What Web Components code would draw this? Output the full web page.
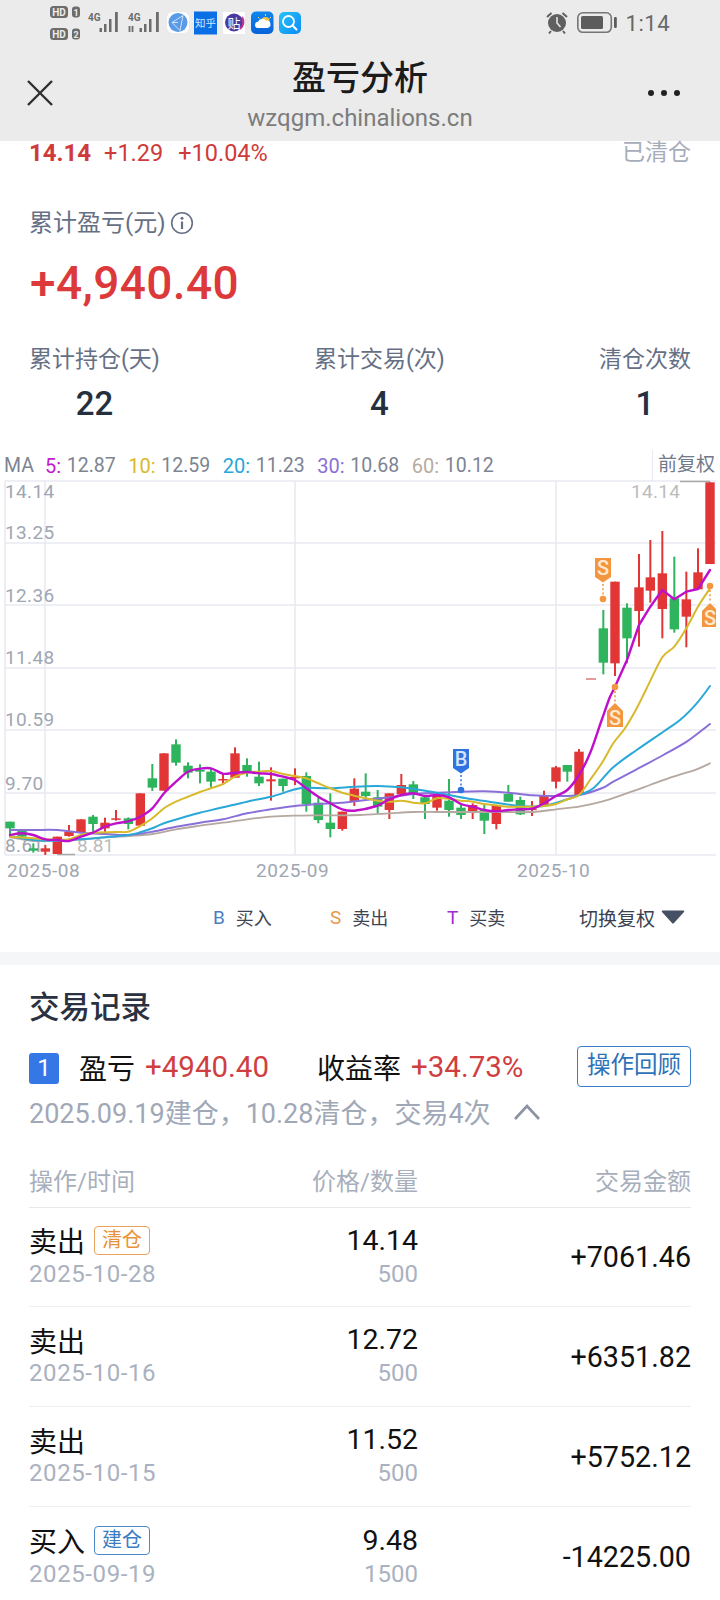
<!DOCTYPE html>
<html lang="zh"><head><meta charset="utf-8"><title>盈亏分析</title>
<style>
html,body{margin:0;padding:0;background:#fff}
body{font-family:Roboto,"Noto Sans CJK SC",sans-serif}
app-page{display:block;width:720px;height:1600px;overflow:hidden}
</style></head>
<body>
<app-page>
  <status-bar></status-bar>
  <nav-bar title="盈亏分析" url="wzqgm.chinalions.cn"></nav-bar>
  <stock-summary></stock-summary>
  <kline-chart></kline-chart>
  <trade-panel>
    <trade-row action="卖出" tag="清仓" kind="sell" date="2025-10-28" price="14.14" qty="500" amount="+7061.46" first></trade-row>
    <trade-row action="卖出" date="2025-10-16" price="12.72" qty="500" amount="+6351.82"></trade-row>
    <trade-row action="卖出" date="2025-10-15" price="11.52" qty="500" amount="+5752.12"></trade-row>
    <trade-row action="买入" tag="建仓" kind="buy" date="2025-09-19" price="9.48" qty="1500" amount="-14225.00"></trade-row>
  </trade-panel>
</app-page>
<script>
const FONT='Roboto,"Noto Sans CJK SC",sans-serif';
function el(name,html){customElements.define(name,class extends HTMLElement{
  constructor(){super();this.attachShadow({mode:'open'})}
  connectedCallback(){this.shadowRoot.innerHTML=typeof html==='function'?html(this):html}
})}
el('status-bar',`<style>
:host{display:flex;height:50px;background:#ebebeb;align-items:flex-start;box-sizing:border-box;padding-left:50px;font-family:${FONT}}
svg{display:block;flex:none}
.time{margin-left:8px;font-size:22px;line-height:48px;color:#686868;letter-spacing:.5px}
.sp{flex:1}
</style>
<svg width="112" height="50" viewBox="50 0 112 50">
  <g font-family="Roboto" font-weight="700">
  <rect x="50" y="6" width="18" height="12" rx="3.5" fill="#6c6c6c"/><text x="59" y="15.6" font-size="10" fill="#ebebeb" text-anchor="middle">HD</text>
  <rect x="72" y="6.5" width="8" height="11" rx="3" fill="#6c6c6c"/><text x="76" y="15.5" font-size="9" fill="#ebebeb" text-anchor="middle">1</text>
  <rect x="50" y="28" width="18" height="12" rx="3.5" fill="#6c6c6c"/><text x="59" y="37.6" font-size="10" fill="#ebebeb" text-anchor="middle">HD</text>
  <rect x="72" y="28.5" width="8" height="11" rx="3" fill="#6c6c6c"/><text x="76" y="37.5" font-size="9" fill="#ebebeb" text-anchor="middle">2</text>
  <text x="88" y="21" font-size="10" fill="#6c6c6c">4G</text>
  <text x="128" y="21" font-size="10" fill="#6c6c6c">4G</text>
  </g>
  <g fill="#6c6c6c">
   <rect x="99.500" y="28" width="2.500" height="4"/><rect x="104" y="24" width="2.500" height="8"/><rect x="109" y="19" width="2.500" height="13"/><rect x="115" y="12" width="2.800" height="20"/>
   <path d="M129.500 26v6M132.500 26v6" stroke="#6c6c6c" stroke-width="1.800"/>
   <rect x="139.500" y="28" width="2.500" height="4"/><rect x="144" y="24" width="2.500" height="8"/><rect x="149" y="19" width="2.500" height="13"/><rect x="156" y="12" width="2.800" height="20"/>
  </g>
</svg>
<svg width="138" height="50" viewBox="164 0 138 50" style="margin-left:2px">
  <defs><linearGradient id="w" x1="0" y1="0" x2="0" y2="1"><stop offset="0" stop-color="#0f86ee"/><stop offset="1" stop-color="#0a63d8"/></linearGradient>
  <linearGradient id="q" x1="0" y1="0" x2="1" y2="1"><stop offset="0" stop-color="#25c3fb"/><stop offset="1" stop-color="#0d8bf5"/></linearGradient></defs>
  <rect x="167" y="12" width="22" height="21" rx="6" fill="#fff"/>
  <circle cx="178" cy="22.500" r="9.500" fill="#5a9ae6"/>
  <path d="M183 15.500L172 22.500L180 30.500L183 15.500M172 22.500L178 22.500" fill="none" stroke="#cfe3fa" stroke-width="1"/>
  <rect x="194" y="11.500" width="23" height="23" fill="#0a6fe4"/>
  <text x="205.500" y="27" font-size="10.500" fill="#cfe6ff" text-anchor="middle" font-family="Noto Sans CJK SC">知乎</text>
  <rect x="223" y="12" width="22" height="22" fill="#fff"/>
  <circle cx="234" cy="22.500" r="9" fill="#4a3aa0"/>
  <path d="M242 17a9 9 0 0 1-2 12" stroke="#c0308e" stroke-width="2" fill="none"/>
  <text x="234" y="27.500" font-size="13" fill="#fff" text-anchor="middle" font-family="Noto Sans CJK SC">贴</text>
  <rect x="251" y="11.500" width="22.500" height="22.500" rx="5" fill="url(#w)"/>
  <circle cx="265.500" cy="21" r="4" fill="#f3c544"/>
  <path d="M265.500 14v2M271 17l-1.500 1.500M258 17l1.500 1.500" stroke="#f3d27a" stroke-width="1"/>
  <path d="M257.500 28a3.200 3.200 0 0 1 .5-6.300a4.500 4.500 0 0 1 8-1a3.600 3.600 0 0 1 1.500 7.300z" fill="#fff"/>
  <rect x="279" y="12" width="22" height="22" rx="5" fill="url(#q)"/>
  <circle cx="288.500" cy="21.500" r="5.500" fill="none" stroke="#fff" stroke-width="1.800"/>
  <path d="M292.500 25.500L296.500 29.500" stroke="#fff" stroke-width="2" stroke-linecap="round"/>
</svg>
<span class="sp"></span>
<svg width="72" height="50" viewBox="547 0 72 50">
  <circle cx="558" cy="23" r="9" fill="#5f5f5f"/>
  <path d="M558 17v6l3.500 4" stroke="#ebebeb" stroke-width="1.500" fill="none"/>
  <path d="M548 17l4.500-4M568 17l-4.500-4M552 31l-2 2.500M564 31l2 2.500" stroke="#5f5f5f" stroke-width="2" fill="none"/>
  <rect x="578.800" y="12.800" width="33.500" height="19.500" rx="5" fill="none" stroke="#757575" stroke-width="1.600"/>
  <rect x="582" y="16" width="22" height="13" rx="1.500" fill="#5c5c5c"/>
  <rect x="615" y="17" width="2.800" height="11" rx="1.200" fill="#5c5c5c"/>
</svg>
<span class="time">1:14</span><span style="width:50px"></span>`);
el('nav-bar',t=>`<style>
:host{display:flex;height:91px;background:#ebebeb;align-items:center;box-sizing:border-box;padding:0 27px;font-family:${FONT}}
.x,.m{width:60px;flex:none;display:flex;margin-top:-5px}
.m{justify-content:flex-end}
.c{flex:1;text-align:center;margin-top:-1px}
.t{font-size:34px;line-height:42px;font-weight:500;color:#1b1b1b;font-family:"Noto Sans CJK SC",sans-serif}
.u{font-size:24px;line-height:34px;margin-top:4px;color:#7c7c7c}
svg{display:block}
</style>
<div class="x"><svg width="26" height="26" viewBox="0 0 26 26"><path d="M1 1L25 25M25 1L1 25" stroke="#303030" stroke-width="2.400"/></svg></div>
<div class="c"><div class="t">${t.getAttribute('title')}</div><div class="u">${t.getAttribute('url')}</div></div>
<div class="m"><svg width="36" height="8" viewBox="0 0 36 8" style="margin-right:11px"><circle cx="5" cy="4" r="3" fill="#222"/><circle cx="18" cy="4" r="3" fill="#222"/><circle cx="31" cy="4" r="3" fill="#222"/></svg></div>`);
el('stat-item',t=>`<style>
:host{display:block;text-align:center}
.l{font-size:23px;line-height:26px;color:#667085}
.v{font-size:33px;line-height:40px;margin-top:11px;color:#262f3e;font-weight:500}
</style><div class="l">${t.getAttribute('label')}</div><div class="v">${t.getAttribute('value')}</div>`);
el('stock-summary',`<style>
:host{display:block;padding:0 29px;background:#fff;font-family:${FONT}}
.row{display:flex;align-items:center;height:24px;line-height:24px;color:#cf3a3a;font-size:23.500px}
.row b{font-size:24px;font-weight:700;margin-right:13px}
.row span{margin-right:15px}
.row i{margin-left:auto;font-style:normal;color:#a5adbb;font-size:23px}
.lab{margin-top:45px;display:flex;align-items:center;font-size:24px;line-height:26px;color:#667085;gap:4px}
.big{margin-top:19px;font-size:46px;line-height:56px;font-weight:500;color:#dc3a3a;margin-left:1px;letter-spacing:.4px}
.stats{margin-top:36px;display:flex;justify-content:space-between}
svg{display:block}
</style>
<div class="row"><b>14.14</b><span>+1.29</span><span>+10.04%</span><i>已清仓</i></div>
<div class="lab">累计盈亏(元)<svg width="24" height="24" viewBox="0 0 24 24"><circle cx="12" cy="12" r="10.300" fill="none" stroke="#667085" stroke-width="1.600"/><circle cx="12" cy="7.200" r="1.500" fill="#667085"/><path d="M12 10.500V18" stroke="#667085" stroke-width="2.200"/></svg></div>
<div class="big">+4,940.40</div>
<div class="stats"><stat-item label="累计持仓(天)" value="22"></stat-item><stat-item label="累计交易(次)" value="4"></stat-item><stat-item label="清仓次数" value="1"></stat-item></div>`);

const A=[[30,'g',425,445,425,465],[66,'g',453,470,450,478],[100,'g',505,512,490,518],[136,'r',505,515,495,525],[172,'r',470,522,470,522],[207,'r',455,468,435,470],[243,'r',418,458,418,458],[279,'g',410,432,405,455],[315,'r',428,445,413,463],[348,'r',415,419,390,422],[385,'g',415,432,412,448],[421,'r',340,437,340,437],[457,'g',295,323,252,333],[492,'r',220,332,220,332],[528,'g',193,248,178,257],[564,'g',257,278,247,295],[600,'g',270,275,253,310],[633,'g',275,305,265,322],[669,'r',297,301,285,315],[705,'r',220,293,202,293],[741,'g',255,275,235,290],[777,'g',290,310,245,318],[813,'r',298,304,262,362],[849,'g',296,318,296,335],[885,'r',290,295,265,315],[919,'g',288,372,277,395],[955,'g',368,420,352,430],[991,'g',428,447,340,472],[1027,'r',395,447,395,452],[1063,'r',326,365,295,378]];
const B=[[17,'g',335,348,280,358],[53,'g',352,380,330,400],[88,'r',340,390,340,417],[124,'r',315,343,282,345],[160,'g',313,345,303,357],[195,'g',352,372,350,417],[231,'r',345,383,340,392],[267,'g',362,390,297,410],[303,'g',383,405,375,417],[338,'r',375,397,370,417],[373,'g',390,422,370,462],[409,'r',375,432,375,448],[445,'g',342,365,315,365],[481,'g',360,403,350,405],[516,'r',385,390,363,408],[552,'r',345,375,332,375],[588,'r',262,305,258,325],[622,'g',255,275,255,305],[657,'r',215,345,207,345]];
const C=[[730,'g',535,638,480,673],[765,'r',395,640,395,678],[801,'g',473,565,460,640],[837,'r',412,483,312,590],[871,'r',382,422,270,458],[907,'r',370,477,243,565],[943,'g',445,538,320,548],[979,'r',448,500,365,592],[1014,'r',367,418,295,420],[1050,'r',97,342,97,342]];
const RED='#e23636',GREEN='#2eb45c';
function candles(list,ox,oy){return list.map(([x,k,t,b,wt,wb])=>{
  const c=k==='r'?RED:GREEN,X=ox+x/3;
  return `<rect x="${X-1}" y="${oy+wt/3}" width="2" height="${(wb-wt)/3}" fill="${c}"/><rect x="${X-4.7}" y="${oy+t/3}" width="9.400" height="${Math.max(1.5,(b-t)/3)}" fill="${c}"/>`}).join('')}
const seg=(p,ox,oy)=>p.map(([x,y])=>[ox+x/3,oy+y/3]);
function line(pts,color,w,sharpFrom){
  const f=n=>n.toFixed(1);
  let d=`M${f(pts[0][0])} ${f(pts[0][1])}`;
  for(let i=0;i<pts.length-1;i++){
    if(sharpFrom!==undefined&&i>=sharpFrom){d+=`L${f(pts[i+1][0])} ${f(pts[i+1][1])}`;continue}
    const p0=pts[Math.max(0,i-1)],p1=pts[i],p2=pts[i+1],p3=pts[Math.min(pts.length-1,i+2)];
    d+=`C${f(p1[0]+(p2[0]-p0[0])/6)} ${f(p1[1]+(p2[1]-p0[1])/6)} ${f(p2[0]-(p3[0]-p1[0])/6)} ${f(p2[1]-(p3[1]-p1[1])/6)} ${f(p2[0])} ${f(p2[1])}`}
  return `<path d="${d}" fill="none" stroke="${color}" stroke-width="${w}" stroke-linejoin="round" stroke-linecap="round"/>`}
const MA5=[...seg([[30,465],[66,460],[100,465],[136,478],[172,480],[207,483],[243,470],[279,458],[315,440],[348,430],[385,424],[421,410],[457,385],[492,340],[528,305],[564,275],[600,266],[633,265],[669,281],[705,278],[741,276],[777,280],[813,282],[849,290],[885,300],[919,325],[955,350],[991,370],[1027,388],[1063,392]],0,680),
 ...seg([[50,378],[88,358],[124,345],[160,340],[195,348],[231,345],[267,352],[303,372],[338,380],[373,390],[409,394],[445,390],[481,388],[516,386],[552,370],[588,348],[622,330],[657,285],[690,220],[725,120],[750,50]],360,680),
 ...seg([[765,710],[801,630],[837,525],[871,470],[907,420],[943,448],[979,425],[1014,417],[1050,360]],360,450)];
const MA10=[...seg([[30,470],[100,475],[172,480],[207,478],[243,465],[279,458],[348,456],[385,455],[421,438],[457,415],[492,385],[528,365],[564,350],[600,336],[633,325],[669,312],[705,290],[741,278],[777,275],[813,273],[849,282],[885,288],[919,295],[955,310],[991,325],[1027,338],[1063,347]],0,680),
 ...seg([[53,362],[88,365],[124,362],[160,368],[195,370],[231,355],[267,357],[303,362],[338,365],[373,372],[409,376],[445,380],[481,380],[516,380],[552,378],[588,372],[622,358],[657,345],[690,300],[725,250],[760,190],[795,145],[830,85]],360,680),
 ...seg([[860,715],[907,622],[943,590],[979,535],[1014,470],[1050,415]],360,450)];
const MA20=[...seg([[30,468],[100,480],[172,482],[243,478],[315,472],[385,465],[421,457],[457,445],[492,430],[564,408],[600,398],[669,382],[741,365],[813,350],[885,328],[919,323],[991,325],[1063,320]],0,680),
 ...seg([[53,318],[124,322],[195,332],[267,345],[338,358],[409,368],[481,378],[552,378],[622,358],[657,345],[700,325],[760,262],[830,210],[910,155],[960,120],[1010,70],[1050,18]],360,680)];
const MA30=[...seg([[30,450],[100,450],[172,450],[243,458],[315,462],[385,465],[457,455],[528,440],[600,428],[669,418],[741,400],[813,388],[885,378],[955,372],[1027,368]],0,680),
 ...seg([[0,362],[88,352],[160,342],[231,338],[303,335],[373,334],[445,338],[516,346],[588,348],[657,345],[725,325],[760,305],[830,268],[910,225],[980,185],[1050,132]],360,680)];
const MA60=[...seg([[30,472],[100,483],[172,482],[243,478],[315,472],[385,468],[457,462],[528,448],[600,437],[669,428],[741,418],[813,410],[885,407],[955,406],[1027,406]],0,680),
 ...seg([[0,405],[88,400],[160,396],[231,396],[303,396],[373,396],[445,396],[516,396],[588,388],[657,380],[725,365],[800,340],[870,315],[940,290],[1010,268],[1050,250]],360,680)];
function dots(x,y1,y2,c){return `<path d="M${x} ${y1}V${y2}" stroke="${c}" stroke-width="2" stroke-dasharray="2 2.200" opacity=".75"/>`}
function downTag(x,top,letter,c,lc){
  return `<path d="M${x-8} ${top}h16v19l-8 5.500l-8-5.500z" fill="${c}"/><text x="${x}" y="${top+17}" font-size="20" font-weight="500" fill="${lc}" text-anchor="middle" font-family="Roboto">${letter}</text>`}
function upTag(x,tip,letter,c,lc){
  return `<path d="M${x} ${tip}l8 8v16h-16v-16z" fill="${c}"/><text x="${x}" y="${tip+22}" font-size="20" font-weight="500" fill="${lc}" text-anchor="middle" font-family="Roboto">${letter}</text>`}
const OR='#f4963f';
const hl=[481,543,605,668,730,793,855],vl=[5,45,295,556];
const lab=[['14.14',491],['13.25',532],['12.36',595],['11.48',657],['10.59',719],['9.70',783],['8.61',845]];
el('kline-chart',`<style>
:host{display:block;background:#fff;font-family:${FONT}}
.ma{display:flex;height:31px;margin-top:26px;align-items:center;box-sizing:border-box;padding-left:4px;font-size:19.500px;color:#7d8492;position:relative}
.ma span{white-space:pre}
.ma .k{margin-left:12.500px;margin-right:.75px;font-size:20px}
.ma .k.f{margin-left:11px}
.adj{margin-left:auto;width:68px;height:31px;box-sizing:border-box;border-left:1.500px solid #e9eaf1;padding-left:5px;line-height:30px;font-size:19px;color:#727a8a}
svg{display:block;overflow:visible}
.lg{display:flex;height:30px;margin-top:20px;margin-bottom:20px;align-items:center;padding-left:213px;font-size:18px;color:#3e4552}
.lg b{font-weight:400;font-size:19px;margin-right:11px}
.it{display:flex;align-items:center;width:117px}
.it.t{width:132px}
.sw{display:flex;align-items:center;font-size:19px;color:#3a4250;gap:6px}
</style>
<div class="ma"><span>MA</span><span class="k f" style="color:#c01ccb">5: </span><span>12.87</span><span class="k" style="color:#d9b92b">10: </span><span>12.59</span><span class="k" style="color:#25a7d9">20: </span><span>11.23</span><span class="k" style="color:#8a6fd8">30: </span><span>10.68</span><span class="k" style="color:#b8aba0">60: </span><span>10.12</span><div class="adj">前复权</div></div>
<svg width="720" height="401" viewBox="0 481 720 401" font-family="Roboto">
<defs><clipPath id="cp"><rect x="0" y="481" width="716" height="400"/></clipPath></defs>
${hl.map(y=>`<path d="M5 ${y}H716" stroke="#e9eaf1" stroke-width="1.600"/>`).join('')}
${vl.map(x=>`<path d="M${x} 481V855" stroke="#e9eaf1" stroke-width="1.600"/>`).join('')}
${lab.map(([t,y])=>`<text x="5" y="${y+7}" font-size="19" letter-spacing=".35" fill="#a0a6b2">${t}</text>`).join('')}
<text x="631" y="498" font-size="19" letter-spacing=".3" fill="#bcbcbc">14.14</text><path d="M680 481.500H710" stroke="#a8a8a8" stroke-width="1.500"/>
<text x="77" y="852" font-size="19" fill="#bcbcbc">8.81</text><path d="M57 854.500H75" stroke="#a8a8a8" stroke-width="1.500"/>
${['2025-08|7','2025-09|256','2025-10|517'].map(s=>{const[a,b]=s.split('|');return `<text x="${b}" y="877" font-size="19" letter-spacing=".55" fill="#a0a6b2">${a}</text>`}).join('')}
<g clip-path="url(#cp)">
<rect x="586" y="678" width="10" height="2" fill="#e59a9a"/>
${candles(A,0,680)}${candles(B,360,680)}${candles(C,360,450)}
${line(MA60,'#b5a8a0',1.8)}${line(MA30,'#8a6fd8',2)}${line(MA20,'#29a8d8',2)}${line(MA10,'#d9b92b',2)}${line(MA5,'#be10ca',2.4,MA5.length-10)}
${downTag(461,749,'B','#2f73e0','#d5e4ff')}${dots(461,775,786,'#2f73e0')}<circle cx="461" cy="790" r="3.300" fill="#2f73e0"/>
${downTag(603,558,'S',OR,'#ffe9cf')}${dots(603,584,595,OR)}<circle cx="603" cy="599" r="3.300" fill="${OR}"/>
<circle cx="615" cy="687" r="3.300" fill="${OR}"/>${dots(615,691,702,OR)}${upTag(615,703,'S',OR,'#ffe9cf')}
<circle cx="710" cy="586" r="3.300" fill="${OR}"/>${dots(710,590,602,OR)}${upTag(710,603,'S',OR,'#ffe9cf')}
</g></svg>
<div class="lg"><div class="it"><b style="color:#4a7fc4">B</b>买入</div><div class="it"><b style="color:#e8994a">S</b>卖出</div><div class="it t"><b style="color:#a02cd0">T</b>买卖</div>
<div class="sw">切换复权<svg width="24" height="14" viewBox="0 0 24 14"><path d="M1.500 0.500H22.500Q24 0.500 23 2L13 13Q12 14 11 13L1 2Q0 0.500 1.500 0.500z" fill="#465064"/></svg></div></div>`);
el('trade-panel',`<style>
:host{display:block;border-top:13px solid #f5f6f8;background:#fff;padding:20px 29px 0;font-family:${FONT}}
h2{margin:0;font-size:30.500px;line-height:40px;font-weight:500;color:#2a3140;font-family:"Noto Sans CJK SC",sans-serif}
.sum{display:flex;align-items:center;height:41px;margin-top:21px;font-size:28px;color:#cf3f3f}
.n{width:30px;height:31px;background:#3578e5;border-radius:3px;color:#fff;font-size:24px;line-height:31px;text-align:center;margin-right:20px;margin-top:3px}
.k{color:#111;margin-right:10px;font-size:28px}
.v{font-size:29.500px}
.btn{margin-left:auto;box-sizing:border-box;width:114px;height:41px;border:1.500px solid #3a7bc8;border-radius:4px;color:#2e72b8;font-size:23.500px;line-height:37px;text-align:center}
.meta{display:flex;align-items:center;margin-top:8px;height:32px;font-size:27px;color:#a0a8b8}
.meta svg{margin-left:22px;margin-top:1px}
.hd{display:grid;grid-template-columns:250px 139px 1fr;margin-top:39px;height:32px;line-height:32px;font-size:24px;color:#a8afbc;padding-bottom:9px;border-bottom:1px solid #e8e9ec}
.hd div:nth-child(n+2){text-align:right}
</style>
<h2>交易记录</h2>
<div class="sum"><div class="n">1</div><span class="k">盈亏</span><span class="v" style="margin-right:48px">+4940.40</span><span class="k">收益率</span><span class="v">+34.73%</span><div class="btn">操作回顾</div></div>
<div class="meta">2025.09.19建仓，10.28清仓，交易4次<svg width="28" height="16" viewBox="0 0 28 16"><path d="M2 15L14 2L26 15" fill="none" stroke="#8a93a3" stroke-width="2.600"/></svg></div>
<div class="hd"><div>操作/时间</div><div>价格/数量</div><div>交易金额</div></div>
<slot></slot>`);
el('trade-row',t=>{const a=n=>t.getAttribute(n)||'';const kind=a('kind');
return `<style>
:host{display:grid;grid-template-columns:250px 139px 1fr;height:100px;align-items:center;box-sizing:border-box;border-bottom:1px solid #eeeff2;font-family:${FONT}}
:host([first]){height:99px}
:host(:last-child){border-bottom:0}
.top{display:flex;align-items:center;height:33px;font-size:28px;color:#111}
.tag{margin-left:9px;box-sizing:border-box;width:56px;height:29px;border:1px solid;border-radius:4px;font-size:20px;line-height:26px;text-align:center}
.sell{border-color:#eaa35c;color:#e8923a}.buy{border-color:#4a88c8;color:#3a7cc4}
.sub{height:34px;line-height:34px;font-size:24px;color:#aab1bf;letter-spacing:.6px}
.mid{text-align:right}
.mid .top{justify-content:flex-end;font-size:28.500px}
.mid .sub{letter-spacing:0}
.amt{text-align:right;font-size:28.700px;color:#111}
</style>
<div><div class="top">${a('action')}${a('tag')?`<span class="tag ${kind}">${a('tag')}</span>`:''}</div><div class="sub">${a('date')}</div></div>
<div class="mid"><div class="top">${a('price')}</div><div class="sub">${a('qty')}</div></div>
<div class="amt">${a('amount')}</div>`});
customElements.define('app-page',class extends HTMLElement{constructor(){super();this.attachShadow({mode:'open'}).innerHTML='<slot></slot>'}});
</script>
</body></html>
